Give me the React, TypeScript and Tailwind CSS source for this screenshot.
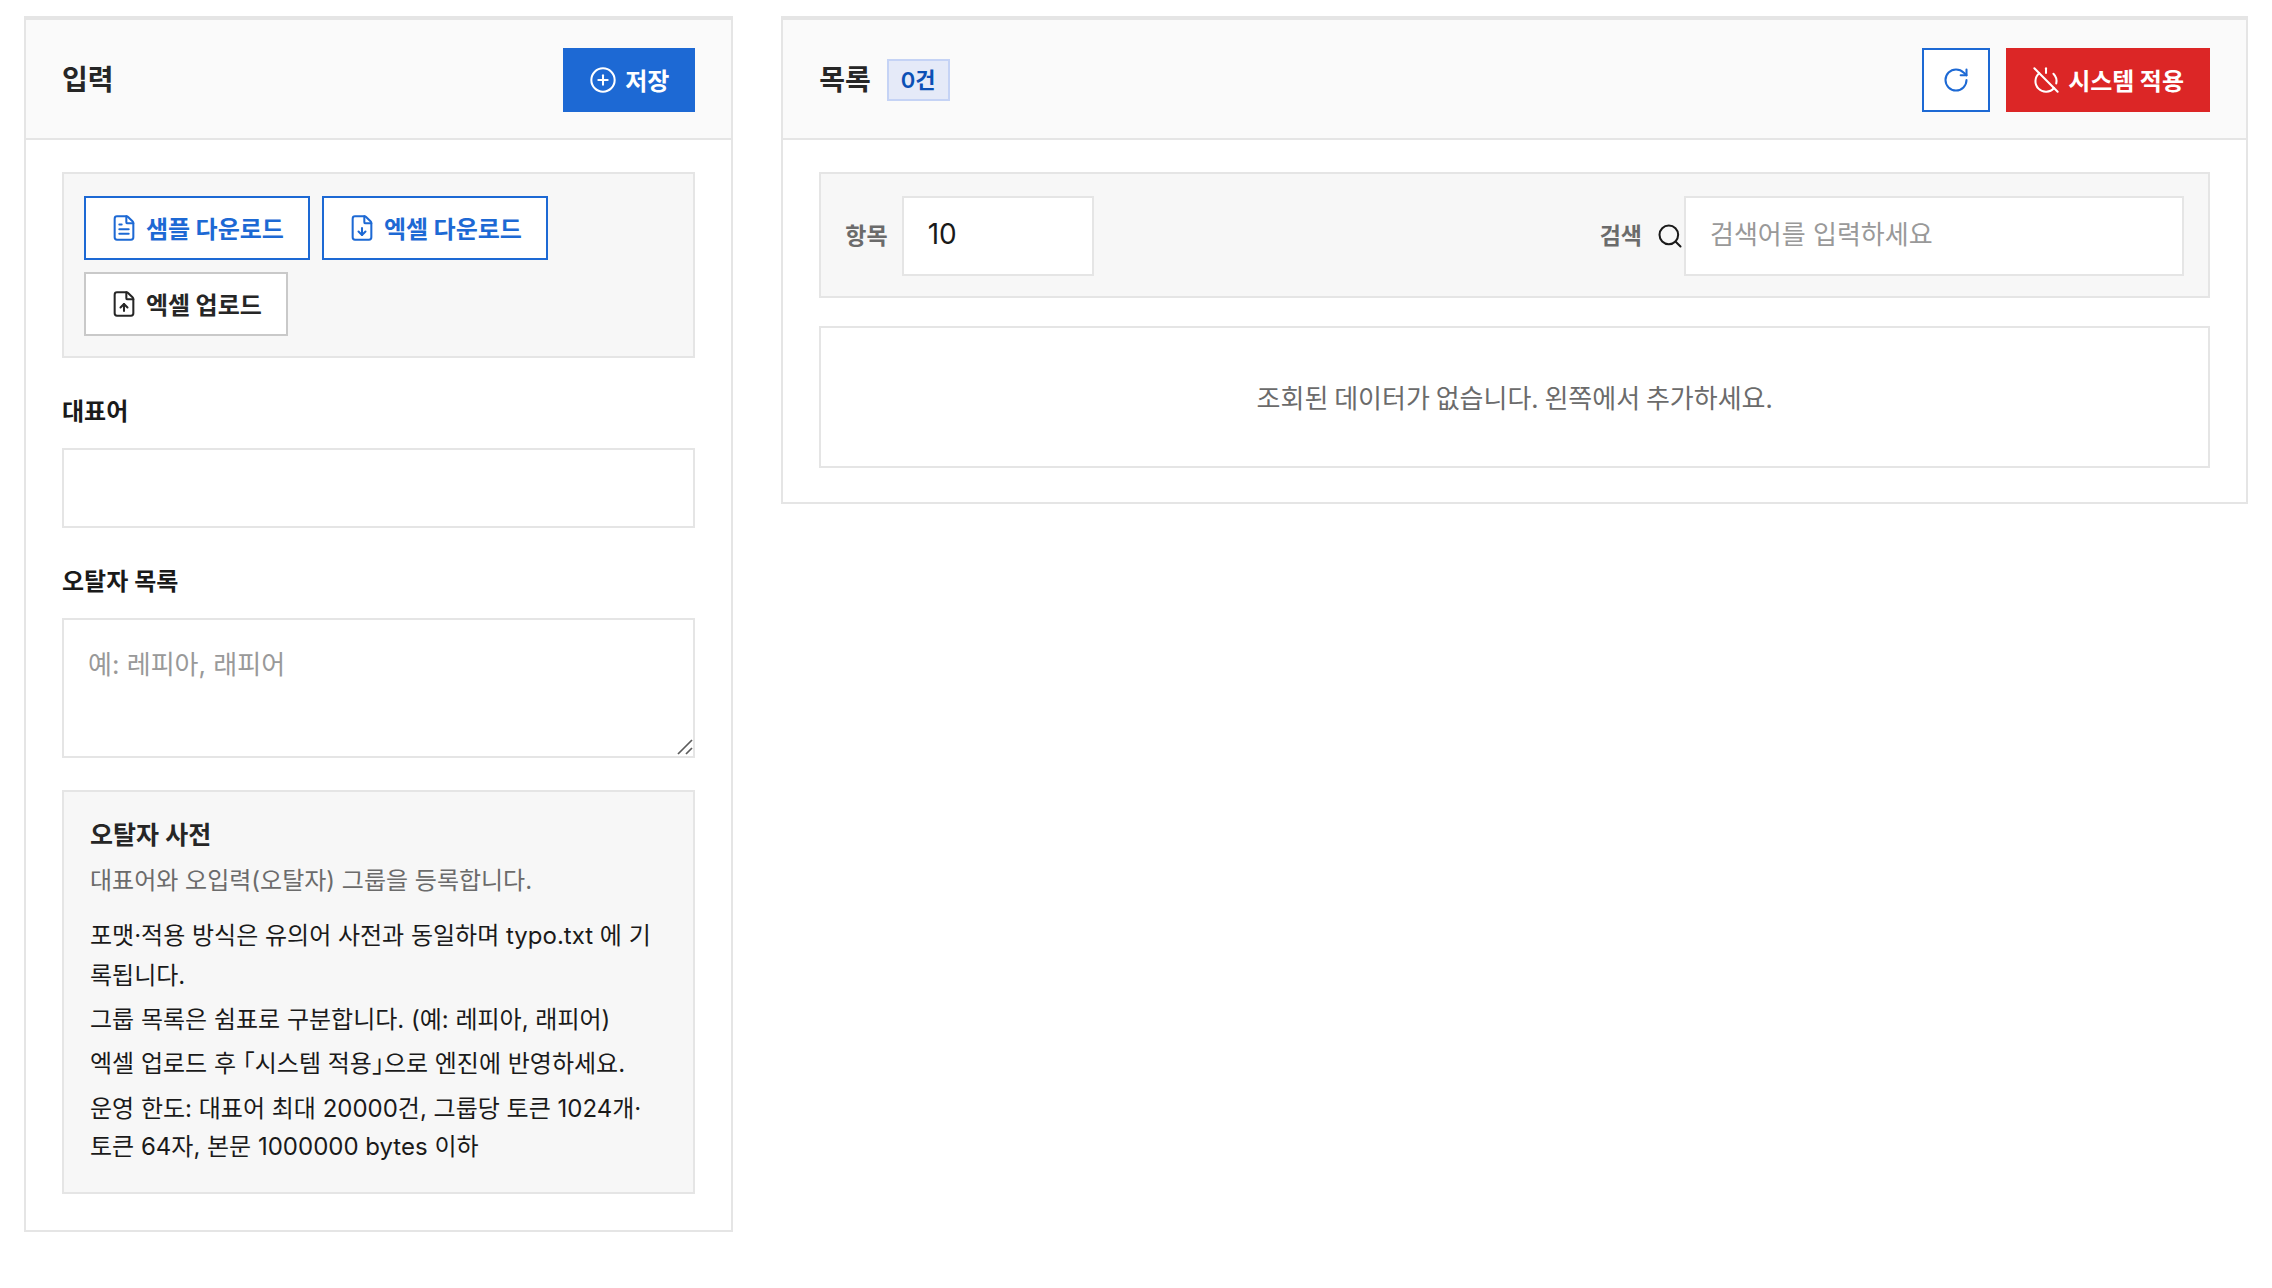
import { useState } from 'react'
import type { ReactNode } from 'react'
import {
  CirclePlus,
  FileDown,
  FileText,
  FileUp,
  PowerOff,
  RotateCw,
  Search
} from 'lucide-react'

const fileActions = [
  { name: '샘플 다운로드', icon: FileText, tone: 'border-[#1d69d4] text-[#1d69d4]' },
  { name: '엑셀 다운로드', icon: FileDown, tone: 'border-[#1d69d4] text-[#1d69d4]' },
  { name: '엑셀 업로드', icon: FileUp, tone: 'border-[#c9c9c9] text-[#262626]' }
]

const guideItems = [
  '포맷·적용 방식은 유의어 사전과 동일하며 typo.txt 에 기록됩니다.',
  '그룹 목록은 쉼표로 구분합니다. (예: 레피아, 래피어)',
  '엑셀 업로드 후 「시스템 적용」으로 엔진에 반영하세요.'
]

const fieldClass =
  'h-20 border-2 border-[#e5e5e5] bg-white px-6 pb-1 text-[28px] text-[#1a1a1a] placeholder:text-[26px] placeholder:text-[#999999] focus:outline-none focus:border-[#1d69d4]'

const buttonClass =
  "flex h-16 items-center gap-2 border-2 px-6 font-['Noto_Sans_CJK_KR',sans-serif] text-[24px] font-semibold whitespace-nowrap"

function Card({ header, children }: { header: ReactNode; children: ReactNode }) {
  return (
    <>
      <header className="flex items-center justify-between border-b-2 border-[#e5e5e5] bg-[#fafafa] px-9 pt-7 pb-[26px]">
        {header}
      </header>
      <div className="px-9 pt-8">{children}</div>
    </>
  )
}

export default function App() {
  const [word, setWord] = useState('')
  const [typos, setTypos] = useState('')
  const [pageSize, setPageSize] = useState('10')
  const [keyword, setKeyword] = useState('')

  return (
    <main className="grid grid-cols-3 items-start gap-12 bg-white px-6 py-4 font-['Inter','Noto_Sans_CJK_KR',sans-serif] text-[24px] text-[#1a1a1a]">
      {/* 입력 */}
      <section className="border-2 border-t-4 border-[#e5e5e5] pb-9">
        <Card
          header={
            <>
              <h2 className="text-[28px] font-bold text-[#262626]">입력</h2>
              <button type="button" className={`${buttonClass} border-[#1d69d4] bg-[#1d69d4] text-white`}>
                <CirclePlus size={28} strokeWidth={1.75} />
                저장
              </button>
            </>
          }
        >
          <div className="flex flex-wrap gap-3 border-2 border-[#e5e5e5] bg-[#f7f7f7] px-5 pt-[22px] pb-5">
            {fileActions.map((action) => {
              const Icon = action.icon
              return (
                <button key={action.name} type="button" className={`${buttonClass} bg-white ${action.tone}`}>
                  <Icon size={28} strokeWidth={1.75} />
                  {action.name}
                </button>
              )
            })}
          </div>

          <label htmlFor="word" className="mt-[34px] block leading-[40px] font-semibold">
            대표어
          </label>
          <input
            id="word"
            type="text"
            value={word}
            onChange={(e) => setWord(e.target.value)}
            className={`${fieldClass} mt-4 block w-full`}
          />

          <label htmlFor="typos" className="mt-[34px] block leading-[40px] font-semibold">
            오탈자 목록
          </label>
          <div className="relative mt-4">
            <textarea
              id="typos"
              value={typos}
              onChange={(e) => setTypos(e.target.value)}
              placeholder="예: 레피아, 래피어"
              className="block h-[140px] w-full resize-none border-2 border-[#e5e5e5] bg-white px-6 py-[25px] text-[26px] leading-[40px] placeholder:text-[#999999] focus:border-[#1d69d4] focus:outline-none"
            />
            <svg
              className="pointer-events-none absolute right-[2px] bottom-[3px] h-4 w-4"
              viewBox="0 0 16 16"
              stroke="#5c5c5c"
              strokeWidth="1.75"
              aria-hidden="true"
            >
              <path d="M1 15 15 1M9 15l6-6" />
            </svg>
          </div>

          <div className="mt-8 border-2 border-[#e5e5e5] bg-[#f7f7f7] px-[26px] pt-6 pb-[26px]">
            <h3 className="text-[25px] leading-[38px] font-semibold text-[#262626]">오탈자 사전</h3>
            <p className="mt-2 leading-[38px] text-[#6b6b6b]">대표어와 오입력(오탈자) 그룹을 등록합니다.</p>
            <ul className="mt-4 space-y-1 leading-[40px] [font-feature-settings:'halt']">
              {guideItems.map((item) => (
                <li key={item}>{item}</li>
              ))}
            </ul>
            <p className="mt-[6px] pr-2 leading-[38px]">
              운영 한도: 대표어 최대 20000건, 그룹당 토큰 1024개·토큰 64자, 본문 1000000 bytes 이하
            </p>
          </div>
        </Card>
      </section>

      {/* 목록 */}
      <section className="col-span-2 border-2 border-t-4 border-[#e5e5e5] pb-[34px]">
        <Card
          header={
            <>
              <div className="flex items-center gap-4">
                <h2 className="text-[28px] font-bold text-[#262626]">목록</h2>
                <span className="flex h-[42px] items-center border-2 border-[#c5d3f5] bg-[#e5eaf8] px-3 text-[22px] font-semibold text-[#0b50b5]">
                  0건
                </span>
              </div>
              <div className="flex gap-4">
                <button
                  type="button"
                  aria-label="새로고침"
                  className="flex h-16 w-[68px] items-center justify-center border-2 border-[#1d69d4] bg-white text-[#1d69d4]"
                >
                  <RotateCw size={28} strokeWidth={1.75} />
                </button>
                <button type="button" className={`${buttonClass} border-[#dc2626] bg-[#dc2626] text-white`}>
                  <PowerOff size={28} strokeWidth={1.75} />
                  시스템 적용
                </button>
              </div>
            </>
          }
        >
          <div className="flex items-center justify-between border-2 border-[#e5e5e5] bg-[#f7f7f7] px-6 pt-[22px] pb-5">
            <div className="flex items-center gap-[14px]">
              <label htmlFor="page-size" className="text-[23px] font-semibold text-[#6b6b6b]">
                항목
              </label>
              <input
                id="page-size"
                type="number"
                value={pageSize}
                onChange={(e) => setPageSize(e.target.value)}
                className={`${fieldClass} w-48`}
              />
            </div>
            <div className="flex items-center">
              <label htmlFor="keyword" className="mr-[14px] text-[23px] font-semibold text-[#6b6b6b]">
                검색
              </label>
              <Search size={28} strokeWidth={1.75} />
              <input
                id="keyword"
                type="search"
                value={keyword}
                onChange={(e) => setKeyword(e.target.value)}
                placeholder="검색어를 입력하세요"
                className={`${fieldClass} w-[500px]`}
              />
            </div>
          </div>

          <p className="mt-7 border-2 border-[#e5e5e5] px-6 py-[49px] text-center font-['Noto_Sans_CJK_KR',sans-serif] text-[26px] leading-[40px] text-[#6b6b6b]">
            조회된 데이터가 없습니다. 왼쪽에서 추가하세요.
          </p>
        </Card>
      </section>
    </main>
  )
}
